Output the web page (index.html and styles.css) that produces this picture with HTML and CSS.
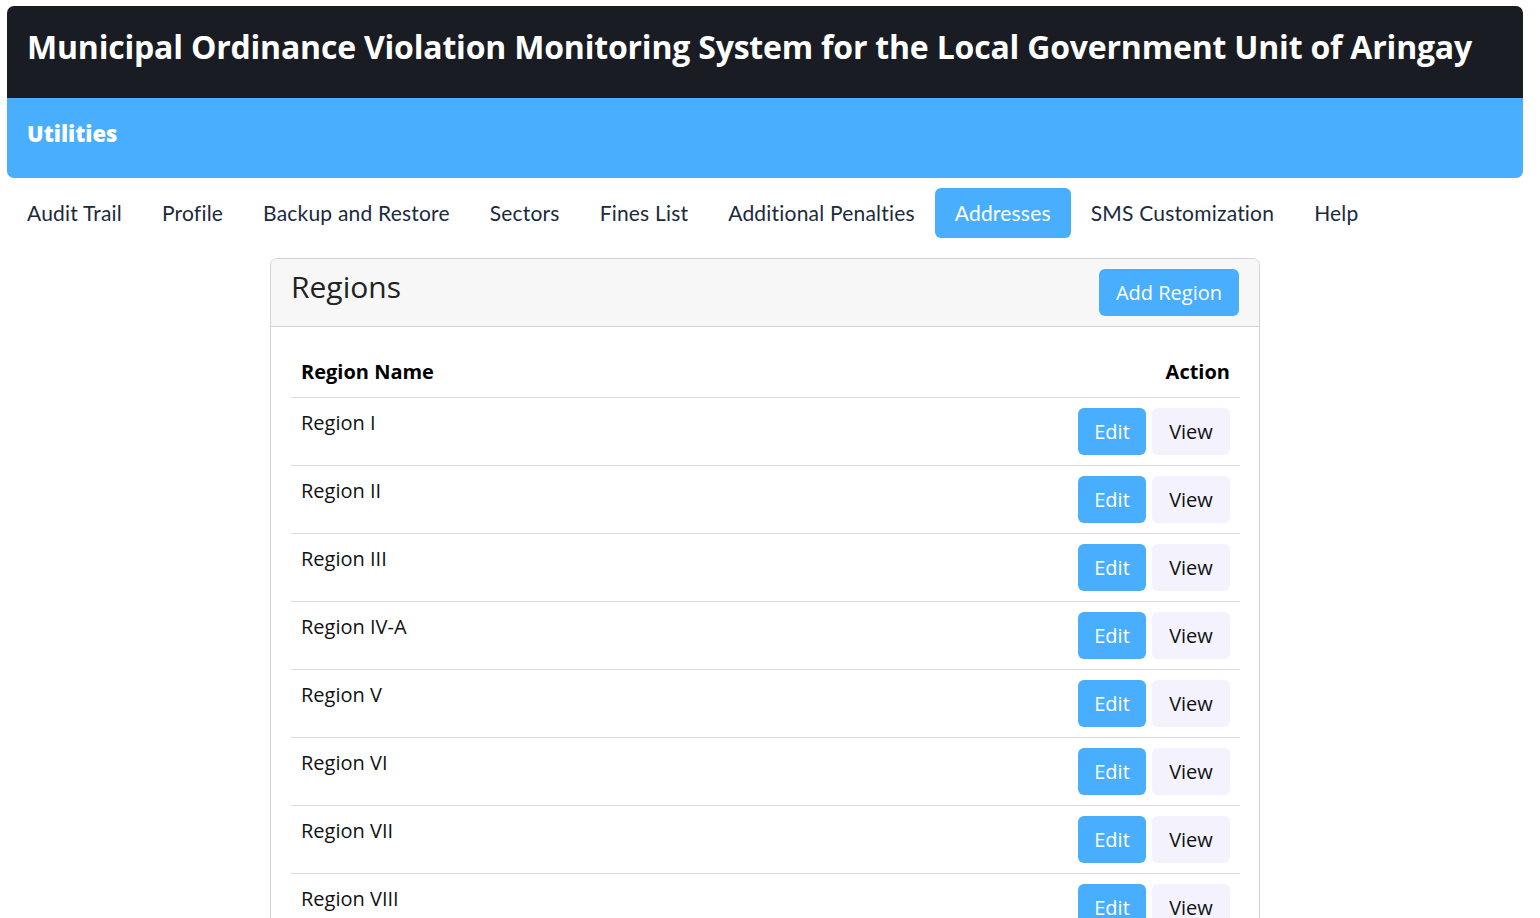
FILE: index.html
```html
<!DOCTYPE html>
<html lang="en">
<head>
<meta charset="utf-8">
<title>Utilities - Addresses</title>
<link rel="stylesheet" href="styles.css">
</head>
<body>
<div class="page">
  <header class="banner">
    <h1 class="banner-title">Municipal Ordinance Violation Monitoring System for the Local Government Unit of Aringay</h1>
  </header>
  <div class="subbar">
    <h2 class="subbar-title">Utilities</h2>
  </div>
  <nav class="tabs">
    <a class="tab">Audit Trail</a>
    <a class="tab">Profile</a>
    <a class="tab">Backup and Restore</a>
    <a class="tab">Sectors</a>
    <a class="tab">Fines List</a>
    <a class="tab">Additional Penalties</a>
    <a class="tab active">Addresses</a>
    <a class="tab">SMS Customization</a>
    <a class="tab">Help</a>
  </nav>
  <section class="card">
    <div class="card-header">
      <h3 class="card-title">Regions</h3>
      <button class="btn btn-primary btn-add">Add Region</button>
    </div>
    <div class="card-body">
      <table class="table">
        <thead>
          <tr><th class="col-name">Region Name</th><th class="col-action">Action</th></tr>
        </thead>
        <tbody>
          <tr><td>Region I</td><td class="actions"><button class="btn btn-primary">Edit</button><button class="btn btn-light">View</button></td></tr>
          <tr><td>Region II</td><td class="actions"><button class="btn btn-primary">Edit</button><button class="btn btn-light">View</button></td></tr>
          <tr><td>Region III</td><td class="actions"><button class="btn btn-primary">Edit</button><button class="btn btn-light">View</button></td></tr>
          <tr><td>Region IV-A</td><td class="actions"><button class="btn btn-primary">Edit</button><button class="btn btn-light">View</button></td></tr>
          <tr><td>Region V</td><td class="actions"><button class="btn btn-primary">Edit</button><button class="btn btn-light">View</button></td></tr>
          <tr><td>Region VI</td><td class="actions"><button class="btn btn-primary">Edit</button><button class="btn btn-light">View</button></td></tr>
          <tr><td>Region VII</td><td class="actions"><button class="btn btn-primary">Edit</button><button class="btn btn-light">View</button></td></tr>
          <tr><td>Region VIII</td><td class="actions"><button class="btn btn-primary">Edit</button><button class="btn btn-light">View</button></td></tr>
          <tr><td>Region IX</td><td class="actions"><button class="btn btn-primary">Edit</button><button class="btn btn-light">View</button></td></tr>
          <tr><td>Region X</td><td class="actions"><button class="btn btn-primary">Edit</button><button class="btn btn-light">View</button></td></tr>
        </tbody>
      </table>
    </div>
  </section>
</div>
</body>
</html>
```
FILE: styles.css
```css
* { box-sizing: border-box; }
html, body { margin: 0; padding: 0; background: #fff; }
body { font-family: "Open Sans", "Liberation Sans", sans-serif; color: #212529; }

.page {
  width: 1516px;
  margin: 6px 0 0 7px;
}

.banner {
  background: #1a1c23;
  border-radius: 7px 7px 0 0;
  height: 92px;
  padding: 0 20px 10px;
  display: flex;
  align-items: center;
}
.banner-title {
  margin: 0;
  color: #fff;
  font-family: "Open Sans", sans-serif;
  font-weight: 700;
  font-size: 32px;
  letter-spacing: -0.2px;
  line-height: 40px;
  white-space: nowrap;
}

.subbar {
  background: #48aefd;
  border-radius: 0 0 7px 7px;
  height: 80px;
  padding: 0 20px 10px;
  display: flex;
  align-items: center;
}
.subbar-title {
  margin: 0;
  color: #fff;
  font-family: "Open Sans", sans-serif;
  font-weight: 800;
  font-size: 22px;
  line-height: 30px;
}

.tabs {
  display: flex;
  margin-top: 10px;
  height: 50px;
}
.tab {
  display: flex;
  align-items: center;
  padding: 0 20px 1px;
  height: 50px;
  font-family: "Lato", sans-serif;
  font-size: 21px;
  letter-spacing: 0.2px;
  color: #1b2a3c;
  border-radius: 6px;
  cursor: pointer;
}
.tab.active {
  background: #48aefd;
  color: #fff;
}

.card {
  width: 990px;
  margin: 20px 0 0 263px;
  border: 1px solid #d3d3d3;
  border-radius: 7px;
  overflow: hidden;
}
.card-header {
  background: #f7f7f7;
  border-bottom: 1px solid #d3d3d3;
  padding: 10px 20px;
  display: flex;
  justify-content: space-between;
  align-items: flex-start;
}
.card-title {
  margin: 0;
  font-family: "Open Sans", sans-serif;
  font-weight: 400;
  font-size: 30px;
  line-height: 36px;
  color: #222;
}
.card-body {
  padding: 20px 19px 20px 20px;
}

.btn {
  border: 0;
  border-radius: 6px;
  font-family: "Open Sans", sans-serif;
  font-size: 20px;
  line-height: 26px;
  padding: 10px 16px;
  cursor: pointer;
}
.btn-primary { background: #48aefd; color: #fff; }
.btn-light { background: #f3f2fd; color: #111; }
.btn-add { height: 47px; padding: 0 17px; }

.table {
  width: 100%;
  border-collapse: collapse;
  font-family: "Open Sans", sans-serif;
  font-size: 20px;
  color: #111;
}
.table th, .table td {
  padding: 10px;
  line-height: 30px;
  vertical-align: top;
  text-align: left;
}
.table th { font-weight: 700; color: #000; }
.table th.col-action { text-align: right; }
.table tbody tr { border-top: 1px solid #dedede; }
.table td.actions {
  text-align: right;
  white-space: nowrap;
  display: flex;
  justify-content: flex-end;
  gap: 6px;
}
.actions .btn { height: 47px; }
.actions .btn-primary { width: 68px; padding: 0; }
.actions .btn-light { width: 78px; padding: 0; }
```
